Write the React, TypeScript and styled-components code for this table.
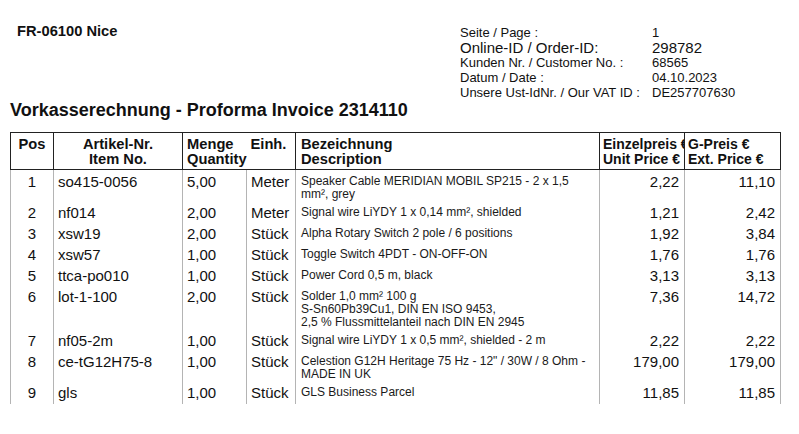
import React from "react"
import styled, { createGlobalStyle } from "styled-components"

const GlobalStyle = createGlobalStyle`
  body {
    margin: 0;
    background: #fff;
    color: #111;
    font-family: "Liberation Sans", Arial, sans-serif;
  }
`

const Page = styled.div`
  width: 799px;
  padding: 0 19px 0 10px;
  box-sizing: border-box;
`

const TopRow = styled.div`
  display: grid;
  grid-template-columns: 450px auto;
  padding-top: 25px;
`

const Address = styled.div`
  padding: 0 0 0 7px;
  margin-top: -2px;
  font-size: 14.7px;
  line-height: 17px;
  font-weight: bold;
`

const InfoGrid = styled.div`
  display: grid;
  grid-template-columns: 192px auto;
`

const InfoText = styled.div<{ $big?: boolean }>`
  font-size: ${(p) => (p.$big ? "15px" : "13px")};
  line-height: 15px;
  white-space: nowrap;
`

const Title = styled.h1`
  margin: 0;
  font-size: 18px;
  line-height: 21px;
  font-weight: bold;
`

const Table = styled.table`
  margin-top: 11px;
  width: 770px;
  border-collapse: collapse;
  table-layout: fixed;
`

const HeadCell = styled.th<{
  $align?: string
  $openRight?: boolean
  $openLeft?: boolean
  $pad?: number
  $small?: boolean
}>`
  border: 1px solid #222;
  ${(p) => (p.$openRight ? "border-right: none;" : "")}
  ${(p) => (p.$openLeft ? "border-left: none;" : "")}
  padding: 4px ${(p) => p.$pad ?? 4}px 2px;
  font-size: ${(p) => (p.$small ? "14px" : "14.7px")};
  line-height: 15px;
  font-weight: bold;
  text-align: ${(p) => p.$align ?? "left"};
  vertical-align: top;
  white-space: nowrap;
  overflow: hidden;
`

const BodyCell = styled.td<{ $align?: string; $last?: boolean }>`
  border-left: 1px solid #b4b4b4;
  border-right: 1px solid #b4b4b4;
  padding: 4px 4px ${(p) => (p.$last ? 3 : 1)}px;
  font-size: 15px;
  line-height: 16px;
  text-align: ${(p) => p.$align ?? "left"};
  vertical-align: top;
  white-space: nowrap;
`

const DescCell = styled.td<{ $last?: boolean }>`
  border-left: 1px solid #b4b4b4;
  border-right: 1px solid #b4b4b4;
  padding: 5px 5px ${(p) => (p.$last ? 3 : 0)}px;
  font-size: 12px;
  line-height: 13px;
  vertical-align: top;
  color: #1a1a1a;
`

const PriceCell = styled(BodyCell)`
  padding-right: 5px;
`

interface Item {
  pos: number
  no: string
  qty: string
  unit: string
  desc: string[]
  price: string
  total: string
}

const items: Item[] = [
  { pos: 1, no: "so415-0056", qty: "5,00", unit: "Meter", desc: ["Speaker Cable MERIDIAN MOBIL SP215 - 2 x 1,5", "mm², grey"], price: "2,22", total: "11,10" },
  { pos: 2, no: "nf014", qty: "2,00", unit: "Meter", desc: ["Signal wire LiYDY 1 x 0,14 mm², shielded"], price: "1,21", total: "2,42" },
  { pos: 3, no: "xsw19", qty: "2,00", unit: "Stück", desc: ["Alpha Rotary Switch 2 pole / 6 positions"], price: "1,92", total: "3,84" },
  { pos: 4, no: "xsw57", qty: "1,00", unit: "Stück", desc: ["Toggle Switch 4PDT - ON-OFF-ON"], price: "1,76", total: "1,76" },
  { pos: 5, no: "ttca-po010", qty: "1,00", unit: "Stück", desc: ["Power Cord 0,5 m, black"], price: "3,13", total: "3,13" },
  {
    pos: 6, no: "lot-1-100", qty: "2,00", unit: "Stück",
    desc: ["Solder 1,0 mm² 100 g", "S-Sn60Pb39Cu1, DIN EN ISO 9453,", "2,5 % Flussmittelanteil nach DIN EN 2945"],
    price: "7,36", total: "14,72",
  },
  { pos: 7, no: "nf05-2m", qty: "1,00", unit: "Stück", desc: ["Signal wire LiYDY 1 x 0,5 mm², shielded - 2 m"], price: "2,22", total: "2,22" },
  {
    pos: 8, no: "ce-tG12H75-8", qty: "1,00", unit: "Stück",
    desc: ["Celestion G12H Heritage 75 Hz - 12\" / 30W / 8 Ohm -", "MADE IN UK"],
    price: "179,00", total: "179,00",
  },
  { pos: 9, no: "gls", qty: "1,00", unit: "Stück", desc: ["GLS Business Parcel"], price: "11,85", total: "11,85" },
]

const info: [string, string, boolean?][] = [
  ["Seite / Page :", "1"],
  ["Online-ID / Order-ID:", "298782", true],
  ["Kunden Nr. / Customer No. :", "68565"],
  ["Datum / Date :", "04.10.2023"],
  ["Unsere Ust-IdNr. / Our VAT ID :", "DE257707630"],
]

export default function App() {
  return (
    <Page>
      <GlobalStyle />
      <TopRow>
        <Address>FR-06100 Nice</Address>
        <InfoGrid>
          {info.map(([label, value, big]) => (
            <React.Fragment key={label}>
              <InfoText $big={big}>{label}</InfoText>
              <InfoText $big={big}>{value}</InfoText>
            </React.Fragment>
          ))}
        </InfoGrid>
      </TopRow>
      <Title>Vorkasserechnung - Proforma Invoice 2314110</Title>
      <Table>
        <colgroup>
          <col style={{ width: 43 }} />
          <col style={{ width: 129 }} />
          <col style={{ width: 64 }} />
          <col style={{ width: 49 }} />
          <col style={{ width: 304 }} />
          <col style={{ width: 85 }} />
          <col style={{ width: 96 }} />
        </colgroup>
        <thead>
          <tr>
            <HeadCell $align="center">Pos</HeadCell>
            <HeadCell $align="center">Artikel-Nr.<br />Item No.</HeadCell>
            <HeadCell $openRight>Menge<br />Quantity</HeadCell>
            <HeadCell $openLeft>Einh.</HeadCell>
            <HeadCell $pad={5}>Bezeichnung<br />Description</HeadCell>
            <HeadCell $pad={3} $small>Einzelpreis €<br />Unit Price €</HeadCell>
            <HeadCell $pad={3} $small>G-Preis €<br />Ext. Price €</HeadCell>
          </tr>
        </thead>
        <tbody>
          {items.map((item, i) => {
            const last = i === items.length - 1
            return (
              <tr key={item.pos}>
                <BodyCell $align="center" $last={last}>{item.pos}</BodyCell>
                <BodyCell $last={last}>{item.no}</BodyCell>
                <BodyCell $last={last}>{item.qty}</BodyCell>
                <BodyCell $last={last}>{item.unit}</BodyCell>
                <DescCell $last={last}>
                  {item.desc.map((line, j) => (
                    <React.Fragment key={j}>
                      {j > 0 && <br />}
                      {line}
                    </React.Fragment>
                  ))}
                </DescCell>
                <PriceCell $align="right" $last={last}>{item.price}</PriceCell>
                <PriceCell $align="right" $last={last}>{item.total}</PriceCell>
              </tr>
            )
          })}
        </tbody>
      </Table>
    </Page>
  )
}
